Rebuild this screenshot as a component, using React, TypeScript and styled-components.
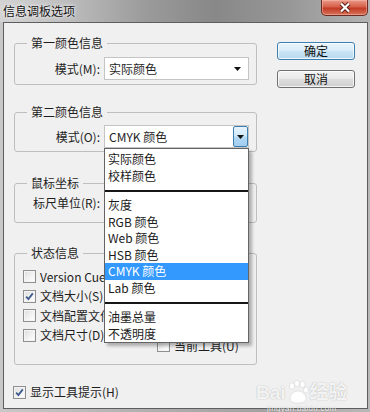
import React from 'react';
import styled, { createGlobalStyle } from 'styled-components';

const GlobalStyle = createGlobalStyle`
  html, body {
    margin: 0;
    padding: 0;
  }
  body {
    width: 370px;
    height: 412px;
    overflow: hidden;
    background: #b4b4b4;
  }
  * {
    box-sizing: border-box;
  }
`;

const Window = styled.div`
  position: relative;
  width: 370px;
  height: 412px;
  display: flex;
  flex-direction: column;
  font-family: 'Microsoft YaHei', 'Noto Sans CJK SC', 'Noto Sans', sans-serif;
  font-size: 12px;
  color: #1e1e1e;
  background: linear-gradient(90deg, #c8c8c8 0%, #b0b0b0 40%, #a2a2a2 70%, #b8b8b8 100%);
  overflow: hidden;
`;

const TitleBar = styled.div`
  height: 22px;
  flex: none;
  display: flex;
  align-items: flex-start;
  justify-content: space-between;
  padding-left: 3px;
  background: linear-gradient(
    90deg,
    #d4d4d4 0%,
    #bdbdbd 18%,
    #9a9a9a 40%,
    #888888 58%,
    #979797 78%,
    #b3b3b3 100%
  );
`;

const Title = styled.span`
  margin-top: 3px;
  line-height: 15px;
  font-size: 12px;
  color: #111111;
  text-shadow: 0 0 5px rgba(255, 255, 255, 0.9), 0 0 2px rgba(255, 255, 255, 0.9);
`;

const CloseButton = styled.div`
  width: 47px;
  height: 16px;
  margin-right: 2px;
  display: flex;
  align-items: center;
  justify-content: center;
  border: 1px solid #6b2b22;
  border-top: none;
  border-radius: 0 0 5px 5px;
  background: linear-gradient(#e99a86 0%, #d6604a 45%, #c23b25 55%, #d8735a 100%);
  box-shadow: inset 0 0 0 1px rgba(255, 200, 190, 0.45);
`;

const Body = styled.div`
  flex: 1;
  position: relative;
  margin: 0 2px 3px 3px;
  padding: 13px 12px 0 10px;
  background: #f0f0f0;
  border: 1px solid #5e5e5e;
  display: grid;
  grid-template-columns: 243px 78px;
  column-gap: 20px;
  align-content: start;
`;

const LeftColumn = styled.div`
  display: flex;
  flex-direction: column;
`;

const ButtonColumn = styled.div`
  display: flex;
  flex-direction: column;
  gap: 10px;
  padding-top: 6px;
`;

const Group = styled.fieldset<{ $top: number; $pb: number }>`
  margin: ${(p) => p.$top}px 0 0 0;
  padding: 0 7px ${(p) => p.$pb}px 0;
  min-width: 0;
  border: 1px solid #bebebe;
  border-radius: 3px;
`;

const Legend = styled.legend`
  margin-left: 12px;
  padding: 0 4px;
  line-height: 14px;
  font-size: 12px;
`;

const FieldRow = styled.div<{ $pt: number }>`
  display: flex;
  align-items: center;
  gap: 4px;
  padding-top: ${(p) => p.$pt}px;
`;

const FieldLabel = styled.span`
  flex: 1;
  text-align: right;
  line-height: 16px;
`;

const SelectWrap = styled.div`
  position: relative;
  width: 145px;
  flex: none;
`;

const SelectBox = styled.div`
  height: 23px;
  display: flex;
  align-items: stretch;
  background: #ffffff;
  border: 1px solid #c4c4c4;
`;

const SelectValue = styled.span`
  flex: 1;
  padding-left: 4px;
  line-height: 21px;
`;

const ArrowCell = styled.span<{ $open?: boolean }>`
  width: 15px;
  display: flex;
  align-items: center;
  justify-content: center;
  margin-right: ${(p) => (p.$open ? '0' : '3px')};
  border: ${(p) => (p.$open ? '1px solid #3c7fb1' : 'none')};
  border-radius: ${(p) => (p.$open ? '2px' : '0')};
  background: ${(p) =>
    p.$open ? 'linear-gradient(#e6f3fc 0%, #cfe8f9 48%, #b2d9f4 52%, #a2cdf0 100%)' : 'transparent'};
`;

const DropList = styled.div`
  position: absolute;
  top: 100%;
  left: 0;
  width: 145px;
  z-index: 5;
  padding-top: 2px;
  background: #ffffff;
  border: 1px solid #646464;
  box-shadow: 3px 3px 3px rgba(0, 0, 0, 0.28);
`;

const DropItem = styled.div<{ $active?: boolean }>`
  height: 16.5px;
  line-height: 16.5px;
  padding-left: 3px;
  color: ${(p) => (p.$active ? '#ffffff' : '#1a1a1a')};
  background: ${(p) => (p.$active ? '#3399ff' : 'transparent')};
`;

const DropSeparator = styled.div`
  height: 13px;
  display: flex;
  align-items: center;
  &::after {
    content: '';
    flex: 1;
    height: 2px;
    background: #161616;
  }
`;

const StatusColumns = styled.div`
  display: grid;
  grid-template-columns: 134px 1fr;
  padding: 7px 0 0 8px;
`;

const CheckColumn = styled.div<{ $pt?: number }>`
  display: flex;
  flex-direction: column;
  padding-top: ${(p) => p.$pt ?? 0}px;
`;

const CheckRow = styled.label`
  height: 19.5px;
  display: flex;
  align-items: center;
  gap: 4px;
  white-space: nowrap;
  line-height: 16px;
`;

const CheckSquare = styled.span`
  width: 13px;
  height: 13px;
  flex: none;
  display: flex;
  align-items: center;
  justify-content: center;
  border: 1px solid #8e8f8f;
  background: linear-gradient(135deg, #dcdcdc 0%, #f4f4f4 60%, #ffffff 100%);
  box-shadow: inset 0 0 0 1px #f4f4f4;
`;

const Footer = styled.div`
  margin-top: 18px;
  margin-left: -1px;
`;

const Button = styled.button<{ $default?: boolean }>`
  width: 78px;
  height: 18px;
  padding: 0;
  font: inherit;
  font-size: 12px;
  line-height: 16px;
  color: #111111;
  border: 1px solid ${(p) => (p.$default ? '#3c7fb1' : '#707070')};
  border-radius: 3px;
  background: ${(p) =>
    p.$default
      ? 'linear-gradient(#eaf5fc 0%, #dcedf8 45%, #c9e3f4 52%, #b9daf0 100%)'
      : 'linear-gradient(#f3f3f3 0%, #ebebeb 45%, #dddddd 52%, #cfcfcf 100%)'};
  box-shadow: inset 0 0 0 1px rgba(255, 255, 255, 0.75);
`;

const Watermark = styled.div`
  position: absolute;
  left: 252px;
  top: 357px;
  display: flex;
  flex-direction: column;
  align-items: center;
  pointer-events: none;
  color: rgba(255, 255, 255, 0.85);
  text-shadow: 0 0 1px rgba(0, 0, 0, 0.2), 0 0 2px rgba(0, 0, 0, 0.1);
`;

const MarkLine = styled.div`
  display: flex;
  align-items: flex-end;
  gap: 1px;
  font-family: 'Liberation Sans', 'Noto Sans CJK SC', sans-serif;
  font-weight: bold;
  font-size: 19px;
  line-height: 22px;
`;

const MarkSmall = styled.div`
  font-family: 'Liberation Sans', sans-serif;
  font-size: 8px;
  line-height: 10px;
  letter-spacing: 0.3px;
`;

const Arrow = () => (
  <svg width="7" height="4" viewBox="0 0 7 4">
    <path d="M0 0H7L3.5 4Z" fill="#111" />
  </svg>
);

const Tick = () => (
  <svg width="9" height="9" viewBox="0 0 9 9">
    <path d="M1.2 4.6 3.4 7 7.8 1.4" fill="none" stroke="#3f5a8c" strokeWidth="1.8" />
  </svg>
);

const Paw = () => (
  <svg width="22" height="24" viewBox="0 0 22 24">
    <g fill="rgba(255,255,255,0.9)" stroke="rgba(0,0,0,0.14)" strokeWidth="0.6">
      <ellipse cx="5" cy="6" rx="2.6" ry="3.2" />
      <ellipse cx="10" cy="3.5" rx="2.6" ry="3.2" />
      <ellipse cx="15.5" cy="4.5" rx="2.6" ry="3.2" />
      <ellipse cx="19" cy="10" rx="2.4" ry="3" />
      <path d="M3 19c0-5 4-8 8-8s8 3 8 8c0 3-3 4-8 4s-8-1-8-4Z" />
    </g>
  </svg>
);

const Check = ({ label, checked }: { label: string; checked?: boolean }) => (
  <CheckRow>
    <CheckSquare>{checked && <Tick />}</CheckSquare>
    <span>{label}</span>
  </CheckRow>
);

const dropTop = ['实际颜色', '校样颜色'];
const dropMiddle = ['灰度', 'RGB 颜色', 'Web 颜色', 'HSB 颜色', 'CMYK 颜色', 'Lab 颜色'];
const dropBottom = ['油墨总量', '不透明度'];

const App = (): JSX.Element => (
  <Window>
    <GlobalStyle />
    <TitleBar>
      <Title>信息调板选项</Title>
      <CloseButton>
        <svg width="14" height="11" viewBox="0 0 14 11">
          <path d="M3 1.5 11 9.5M11 1.5 3 9.5" stroke="#5a1d15" strokeWidth="4" />
          <path d="M3 1.5 11 9.5M11 1.5 3 9.5" stroke="#ffffff" strokeWidth="2.2" />
        </svg>
      </CloseButton>
    </TitleBar>
    <Body>
      <LeftColumn>
        <Group $top={0} $pb={4}>
          <Legend>第一颜色信息</Legend>
          <FieldRow $pt={7}>
            <FieldLabel>模式(M):</FieldLabel>
            <SelectWrap>
              <SelectBox>
                <SelectValue>实际颜色</SelectValue>
                <ArrowCell>
                  <Arrow />
                </ArrowCell>
              </SelectBox>
            </SelectWrap>
          </FieldRow>
        </Group>

        <Group $top={20} $pb={3}>
          <Legend>第二颜色信息</Legend>
          <FieldRow $pt={6}>
            <FieldLabel>模式(O):</FieldLabel>
            <SelectWrap>
              <SelectBox>
                <SelectValue>CMYK 颜色</SelectValue>
                <ArrowCell $open>
                  <Arrow />
                </ArrowCell>
              </SelectBox>
              <DropList>
                {dropTop.map((t) => (
                  <DropItem key={t}>{t}</DropItem>
                ))}
                <DropSeparator />
                {dropMiddle.map((t) => (
                  <DropItem key={t} $active={t === 'CMYK 颜色'}>
                    {t}
                  </DropItem>
                ))}
                <DropSeparator />
                {dropBottom.map((t) => (
                  <DropItem key={t}>{t}</DropItem>
                ))}
              </DropList>
            </SelectWrap>
          </FieldRow>
        </Group>

        <Group $top={24} $pb={8}>
          <Legend>鼠标坐标</Legend>
          <FieldRow $pt={1}>
            <FieldLabel>标尺单位(R):</FieldLabel>
            <SelectWrap>
              <SelectBox>
                <SelectValue />
                <ArrowCell>
                  <Arrow />
                </ArrowCell>
              </SelectBox>
            </SelectWrap>
          </FieldRow>
        </Group>

        <Group $top={23} $pb={8}>
          <Legend>状态信息</Legend>
          <StatusColumns>
            <CheckColumn>
              <Check label="Version Cue" />
              <Check label="文档大小(S)" checked />
              <Check label="文档配置文件" />
              <Check label="文档尺寸(D)" />
            </CheckColumn>
            <CheckColumn $pt={69}>
              <Check label="当前工具(U)" />
            </CheckColumn>
          </StatusColumns>
        </Group>

        <Footer>
          <Check label="显示工具提示(H)" checked />
        </Footer>
      </LeftColumn>

      <ButtonColumn>
        <Button $default>确定</Button>
        <Button>取消</Button>
      </ButtonColumn>

      <Watermark>
        <MarkLine>
          <span>Bai</span>
          <Paw />
          <span>经验</span>
        </MarkLine>
        <MarkSmall>jingyan.baidu.com</MarkSmall>
      </Watermark>
    </Body>
  </Window>
);

export default App;
